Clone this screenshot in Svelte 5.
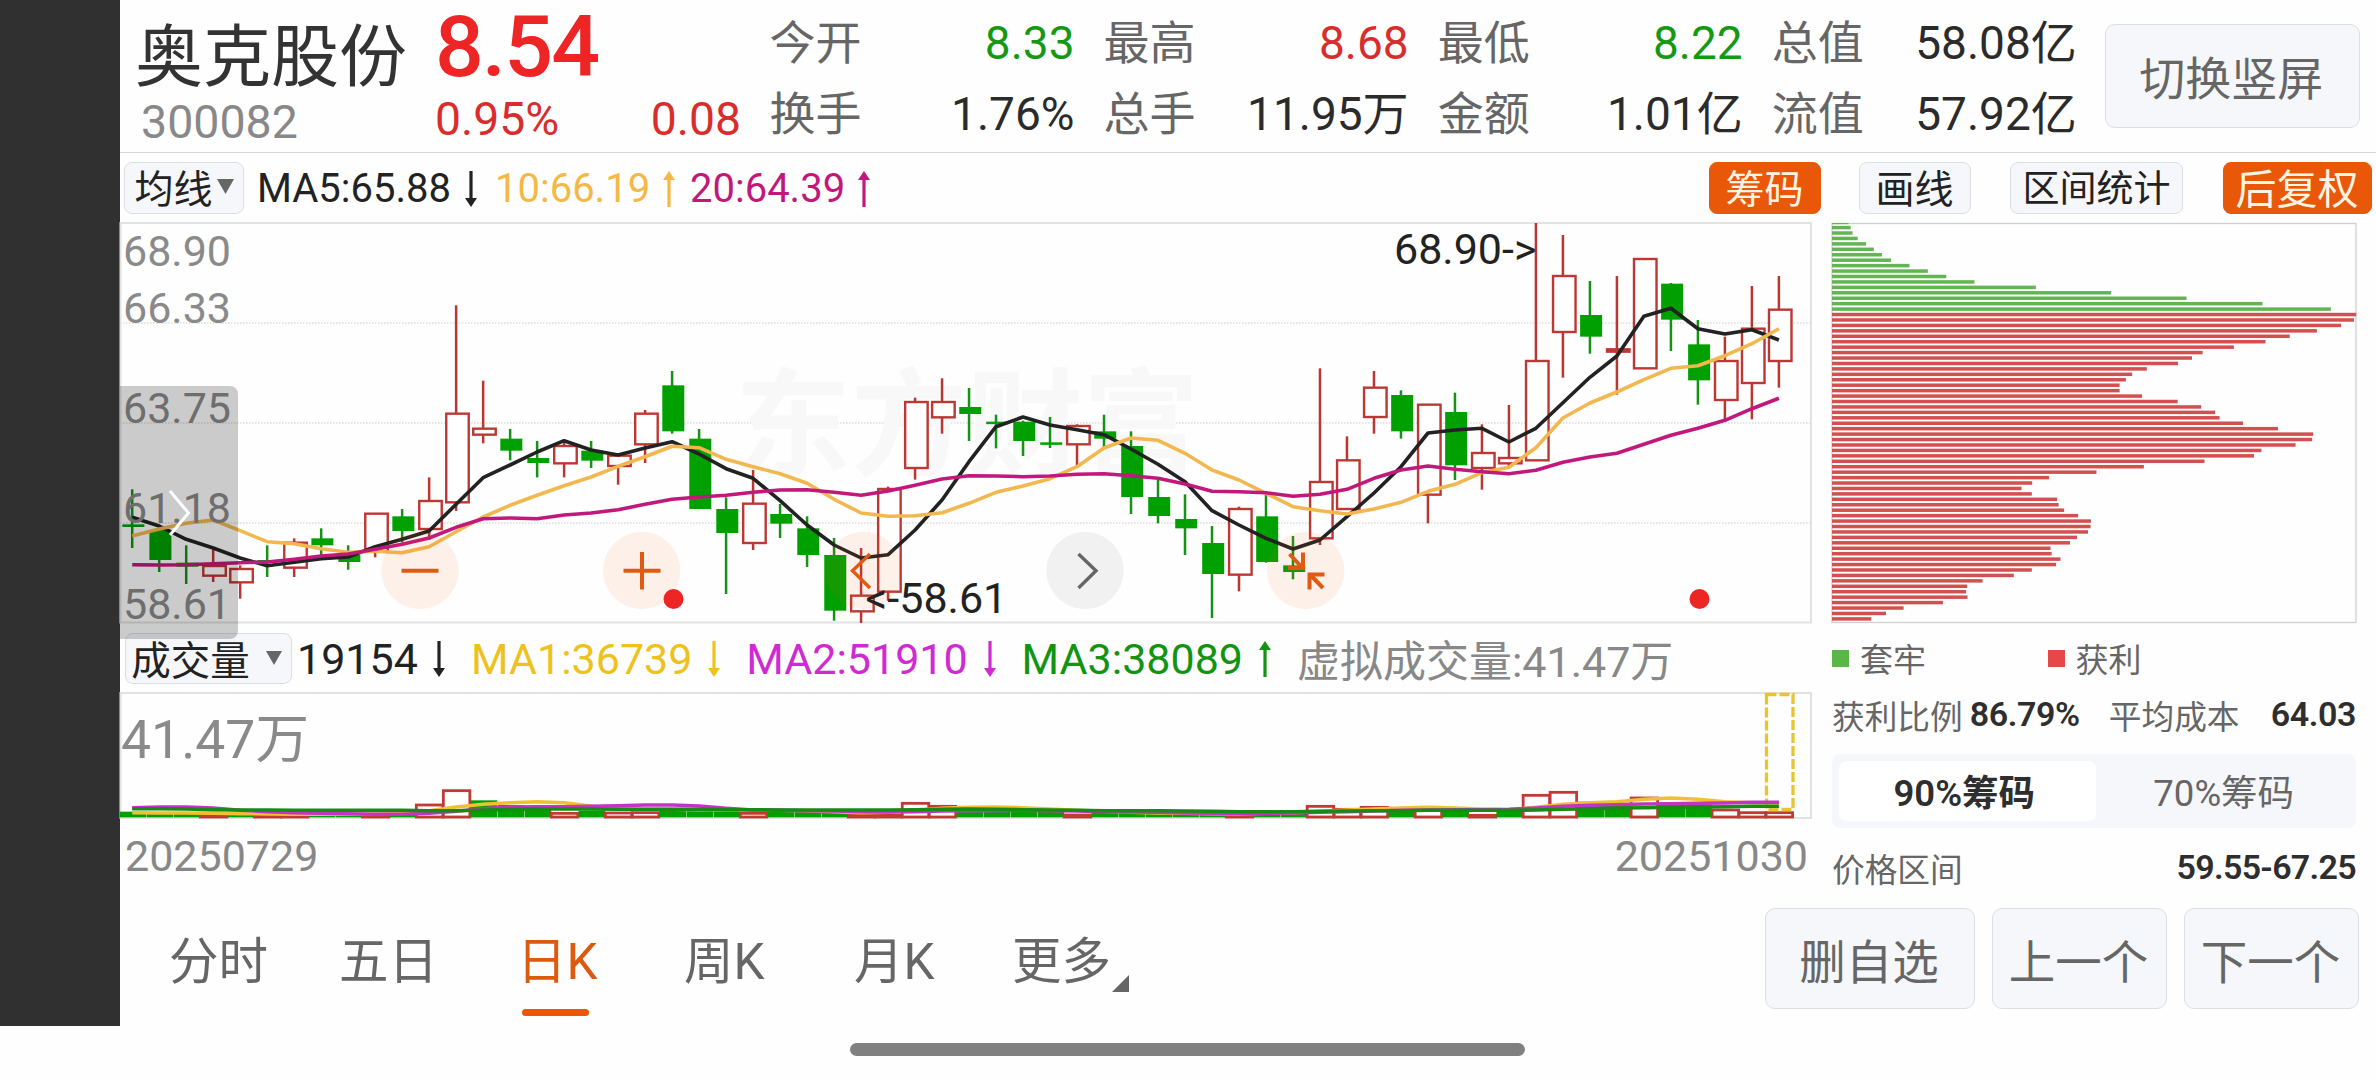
<script>
  const metrics = [
    { label: '今开', value: '8.33', tone: 'down' },
    { label: '最高', value: '8.68', tone: 'up' },
    { label: '最低', value: '8.22', tone: 'down' },
    { label: '总值', value: '58.08亿', tone: '' },
    { label: '换手', value: '1.76%', tone: '' },
    { label: '总手', value: '11.95万', tone: '' },
    { label: '金额', value: '1.01亿', tone: '' },
    { label: '流值', value: '57.92亿', tone: '' },
  ];

  const averages = [
    { text: 'MA5:65.88', dir: 'down', cls: 'ink' },
    { text: '10:66.19', dir: 'up', cls: 'amber' },
    { text: '20:64.39', dir: 'up', cls: 'plum' },
  ];

  const volumes = [
    { text: '19154', dir: 'down', cls: 'ink' },
    { text: 'MA1:36739', dir: 'down', cls: 'gold' },
    { text: 'MA2:51910', dir: 'down', cls: 'violet' },
    { text: 'MA3:38089', dir: 'up', cls: 'green' },
  ];

  const tabs = ['分时', '五日', '日K', '周K', '月K', '更多'];

  // Chart readings are stored in thirds of a pixel below PRICE_TOP.
  const PRICE_TOP = 210;
  const py = (v) => PRICE_TOP + v / 3;
  const cx = (i) => 132.2 + 26.995 * i;

  // [direction, high, body top, body bottom, low]
  const candles = [
    ['g', 838, 943, 951, 1014], ['g', 955, 960, 1050, 1086], ['g', 1006, 1058, 1070, 1122],
    ['r', 1018, 1068, 1097, 1116], ['r', 1066, 1077, 1117, 1166], ['g', 1006, 1050, 1056, 1101],
    ['r', 985, 998, 1073, 1101], ['g', 955, 985, 1006, 1040], ['g', 1006, 1035, 1056, 1079],
    ['r', 909, 911, 1025, 1042], ['g', 897, 919, 963, 998], ['r', 802, 873, 957, 990],
    ['r', 286, 611, 877, 903], ['r', 512, 656, 674, 700], ['g', 657, 686, 722, 751],
    ['g', 693, 744, 759, 802], ['r', 690, 708, 760, 802], ['g', 693, 722, 752, 774],
    ['r', 733, 737, 768, 824], ['r', 600, 611, 703, 759], ['g', 483, 526, 664, 671],
    ['g', 657, 686, 897, 897], ['g', 862, 897, 969, 1152], ['r', 780, 881, 999, 1020],
    ['g', 882, 912, 941, 984], ['g', 919, 955, 1035, 1071], ['g', 984, 1035, 1202, 1232],
    ['r', 1014, 1157, 1204, 1239], ['r', 830, 837, 1145, 1172], ['r', 563, 576, 774, 809],
    ['r', 505, 576, 622, 671], ['g', 534, 591, 612, 693], ['g', 614, 635, 641, 715],
    ['g', 632, 635, 693, 738], ['g', 621, 697, 703, 714], ['r', 643, 648, 703, 773],
    ['g', 614, 664, 686, 712], ['g', 664, 708, 861, 912], ['g', 810, 861, 918, 940],
    ['g', 853, 927, 955, 1035], ['g', 948, 999, 1092, 1224], ['r', 890, 897, 1094, 1144],
    ['g', 855, 919, 1056, 1058], ['g', 978, 1066, 1086, 1108], ['r', 475, 816, 985, 1005],
    ['r', 679, 751, 897, 897], ['r', 483, 533, 621, 671], ['g', 541, 555, 664, 686],
    ['r', 584, 584, 854, 940], ['g', 548, 606, 766, 810], ['r', 643, 729, 774, 839],
    ['r', 585, 744, 760, 768], ['r', 39, 453, 751, 751], ['r', 75, 198, 366, 503],
    ['g', 213, 315, 380, 431], ['r', 198, 418, 425, 554], ['r', 147, 147, 475, 475],
    ['g', 219, 221, 329, 423], ['g', 330, 403, 511, 584], ['r', 380, 453, 570, 632],
    ['r', 228, 356, 519, 628], ['r', 198, 299, 453, 533],
  ];

  const ma5 = [922, 948, 988, 1014, 1044, 1067, 1057, 1046, 1041, 1010, 988, 963, 883, 803, 765, 726, 692, 720, 735, 714, 695, 732, 776, 805, 872, 945, 1005, 1044, 1034, 960, 870, 755, 650, 621, 645, 659, 674, 717, 763, 815, 902, 945, 985, 1017, 990, 920, 849, 770, 669, 660, 655, 696, 655, 578, 502, 438, 319, 295, 356, 372, 359, 390];
  const ma10 = [978, 957, 940, 930, 962, 995, 1001, 1016, 1027, 1024, 1028, 1010, 965, 921, 886, 856, 827, 801, 769, 740, 709, 713, 748, 770, 791, 820, 868, 909, 919, 917, 908, 880, 847, 828, 806, 770, 714, 684, 691, 730, 780, 810, 850, 890, 902, 912, 897, 877, 844, 823, 788, 772, 713, 624, 579, 546, 509, 475, 467, 437, 401, 356];
  const ma20 = [1064, 1065, 1064, 1061, 1058, 1056, 1048, 1038, 1032, 1018, 1003, 984, 952, 926, 924, 926, 915, 909, 899, 883, 868, 861, 856, 847, 840, 839, 847, 856, 843, 826, 807, 797, 798, 800, 798, 793, 791, 797, 805, 822, 844, 845, 848, 859, 853, 838, 805, 780, 768, 778, 785, 791, 781, 757, 741, 730, 703, 676, 655, 631, 596, 565];

  const line = (arr, f) => arr.map((v, i) => `${cx(i).toFixed(1)},${f(v).toFixed(1)}`).join(' ');

  // Bar lengths of the cost distribution, top to bottom
  const chips = [132, 138, 143, 157, 180, 201, 223, 248, 298, 348, 398, 475, 642, 847, 1052, 1259, 1445,
    1514, 1508, 1473, 1407, 1333, 1267, 1181, 1096, 1067, 1029, 944, 904, 887, 870, 870, 931, 1028, 1092, 1130, 1142,
    1206, 1301, 1397, 1394, 1349, 1256, 1236, 1101, 936, 807, 678, 632, 603, 631, 700, 704, 719, 757, 792, 791,
    784, 754, 735, 682, 685, 709, 697, 631, 582, 497, 455, 452, 456, 389, 282, 234, 194];
  const TRAPPED = 17;

  // Volume bars: direction and top
  const vy = (v) => 620 + v / 3;
  const vols = 'g575 g577 g579 r582 g580 r584 r584 g584 g584 r582 g584 r552 r509 g541 g555 g566 r577 g572 r576 r575 g572 g572 g574 r577 g574 g575 g576 r583 r583 r547 r556 g565 g568 g571 g572 r582 g574 g575 g576 g576 g577 r584 g578 g578 r556 r565 r559 g566 r568 g570 r583 g570 r523 r514 g545 g552 r531 g553 g553 r567 r575 r575'
    .split(' ').map((s) => ({ up: s[0] === 'r', top: +s.slice(1) }));

  const v1 = [578, 579, 579, 580, 581, 582, 583, 583, 583, 582, 580, 572, 561, 553, 548, 545, 548, 558, 566, 568, 568, 569, 569, 570, 571, 572, 575, 578, 577, 571, 565, 562, 561, 563, 567, 571, 574, 577, 579, 580, 581, 581, 580, 579, 574, 570, 567, 564, 562, 564, 567, 569, 562, 553, 548, 545, 538, 534, 538, 545, 548, 549];
  const v2 = [563, 561, 561, 564, 571, 575, 578, 580, 581, 583, 583, 580, 574, 566, 561, 560, 560, 559, 557, 555, 555, 558, 565, 570, 571, 572, 573, 575, 576, 575, 573, 572, 572, 571, 572, 573, 575, 576, 577, 579, 580, 580, 580, 579, 577, 575, 573, 571, 570, 569, 569, 568, 564, 559, 556, 554, 552, 551, 550, 549, 547, 547];
  const v3 = [566, 566, 567, 569, 570, 570, 571, 571, 571, 571, 571, 572, 572, 570, 568, 567, 567, 567, 568, 568, 568, 568, 569, 569, 570, 570, 570, 570, 570, 569, 568, 567, 568, 569, 570, 571, 572, 572, 572, 573, 574, 575, 575, 575, 574, 573, 572, 572, 571, 571, 571, 571, 570, 568, 566, 564, 563, 562, 561, 560, 559, 559];
</script>

{#snippet arrow(dir)}
  <svg class="arrow" class:flip={dir === 'down'} viewBox="0 0 12 36" width="12" height="36">
    <path d="M6 4V36" stroke="currentColor" stroke-width="3.200" />
    <path d="M6 0L12 9H0Z" fill="currentColor" />
  </svg>
{/snippet}

<div class="screen">
  <div class="body">
    <aside></aside>
    <main>
      <header>
        <div class="stock">
          <div class="name">奥克股份</div>
          <div class="code">300082</div>
        </div>
        <div class="quote">
          <div class="price">8.54</div>
          <div class="change"><span>0.95%</span><span>0.08</span></div>
        </div>
        <div class="metrics">
          {#each metrics as m}
            <div class="metric"><span class="label">{m.label}</span><span class={m.tone}>{m.value}</span></div>
          {/each}
        </div>
        <button class="rotate">切换竖屏</button>
      </header>

      <div class="toolbar">
        <button class="pick ma-pick">均线<svg width="17" height="15" viewBox="0 0 17 15"><path d="M0 0H17L8.5 15Z" fill="#666" /></svg></button>
        <div class="averages">
          {#each averages as a}
            <span class={a.cls}>{a.text}{@render arrow(a.dir)}</span>
          {/each}
        </div>
        <div class="tools">
          <button class="hot">筹码</button>
          <button>画线</button>
          <button class="stats">区间统计</button>
          <button class="hot adjust">后复权</button>
        </div>
      </div>

      <div class="content">
        <section class="charts">
          <div class="drawer">
            <svg width="24" height="48" viewBox="0 0 24 48"><path d="M2 2L20.500 24L2 46" fill="none" stroke="#fff" stroke-width="3" /></svg>
          </div>
          <svg class="plot" width="1692" height="402" viewBox="120 222 1692 402">
            <rect x="120.500" y="223" width="1690.500" height="399.500" fill="none" stroke="#e2e2e2" stroke-width="2" />
            {#each [323, 423, 523] as y}
              <line x1="120" x2="1811" y1={y} y2={y} stroke="#dcdcdc" stroke-width="1.600" stroke-dasharray="1.500 1.500" />
            {/each}
            <text class="watermark" x="735" y="466">东方财富</text>
            {#each candles as [d, hi, top, bot, lo], i}
              {#if d === 'g'}
                <line x1={cx(i)} x2={cx(i)} y1={py(hi)} y2={py(lo)} stroke="#159315" stroke-width="2.500" />
                <rect x={cx(i) - 9.800} y={py(top)} width="22" height={Math.max(2.500, (bot - top) / 3)} fill="#00a000" />
              {:else}
                <line x1={cx(i)} x2={cx(i)} y1={py(hi)} y2={py(top)} stroke="#b93632" stroke-width="2.500" />
                <line x1={cx(i)} x2={cx(i)} y1={py(bot)} y2={py(lo)} stroke="#b93632" stroke-width="2.500" />
                <rect x={cx(i) - 9.900} y={py(top)} width="22.500" height={(bot - top) / 3} fill={i === 55 ? '#b93632' : '#fff'} stroke="#bc3834" stroke-width="2.400" />
              {/if}
            {/each}
            <polyline points={line(ma5, py)} fill="none" stroke="#222" stroke-width="3.600" stroke-linejoin="round" />
            <polyline points={line(ma10, py)} fill="none" stroke="#f2b84f" stroke-width="3.600" stroke-linejoin="round" />
            <polyline points={line(ma20, py)} fill="none" stroke="#c2187c" stroke-width="3.600" stroke-linejoin="round" />

            <g class="axis">
              <text x="123" y="266">68.90</text>
              <text x="123" y="323">66.33</text>
              <text x="123" y="423">63.75</text>
              <text x="123" y="522.500">61.18</text>
              <text x="123" y="618.500">58.61</text>
            </g>

            <g fill="#f05a10" fill-opacity="0.085">
              <circle cx="420" cy="570.500" r="38.700" />
              <circle cx="641.700" cy="570.500" r="38.700" />
              <circle cx="863.500" cy="570.500" r="38.700" />
              <circle cx="1305.700" cy="570.500" r="38.700" />
            </g>
            <circle cx="1085" cy="570.500" r="38.700" fill="#000" fill-opacity="0.050" />
            <g fill="none" stroke="#e05a12" stroke-width="4">
              <path d="M401.500 570.700H438.500M623.500 570.700H660.500M642 552V589.500" />
              <path d="M870 554L852.500 570.700L870 588" stroke-width="3.400" />
              <path d="M1289.500 554L1302 567.500M1303 552.500V568H1288M1323 588L1310 574.500M1309.500 589.500V574.500H1324.500" />
            </g>
            <path d="M1078.500 554L1096 570.700L1078.500 588" fill="none" stroke="#666" stroke-width="3.400" />
            <circle cx="673.500" cy="599" r="10" fill="#ee2525" />
            <circle cx="1699.500" cy="599" r="10" fill="#ee2525" />
            <text class="mark" x="865.500" y="612.500">&lt;-58.61</text>
            <text class="mark" x="1394" y="263.500">68.90-&gt;</text>
          </svg>

          <div class="volbar">
            <button class="pick vol-pick">成交量<svg width="16" height="14" viewBox="0 0 16 14"><path d="M0 0H16L8 14Z" fill="#666" /></svg></button>
            {#each volumes as v}
              <span class={v.cls}>{v.text}{@render arrow(v.dir)}</span>
            {/each}
            <span class="grey">虚拟成交量:41.47万</span>
          </div>

          <svg class="plot" width="1692" height="128" viewBox="120 692 1692 128">
            <rect x="120.500" y="693" width="1690.500" height="125" fill="none" stroke="#e2e2e2" stroke-width="2" />
            <text class="volmax" x="121" y="757.500">41.47万</text>
            {#each vols as v, i}
              {#if v.up}
                <rect x={cx(i) - 12.800} y={vy(v.top) + 1} width="26.500" height={(591 - v.top) / 3 - 1} fill="#fff" stroke="#c03a36" stroke-width="2.800" />
              {:else}
                <rect x={cx(i) - 12.500} y={vy(v.top)} width="26.600" height={(592 - v.top) / 3} fill="#00a000" />
              {/if}
            {/each}
            <rect x="1766.500" y="694.500" width="26.500" height="115" fill="none" stroke="#e8c52c" stroke-width="3.300" stroke-dasharray="10 3" />
            <polyline points={line(v1, vy)} fill="none" stroke="#f0c030" stroke-width="3.400" />
            <polyline points={line(v2, vy)} fill="none" stroke="#c234c4" stroke-width="3.400" />
            <polyline points={line(v3, vy)} fill="none" stroke="#168c16" stroke-width="3.600" />
          </svg>
          <div class="dates"><span>20250729</span><span>20251030</span></div>
        </section>

        <section class="chip-panel">
          <svg class="plot" width="528" height="402" viewBox="1830 222 528 402">
            <rect x="1832" y="223.500" width="524" height="399" fill="none" stroke="#cfcfcf" stroke-width="1.300" />
            {#each chips as c, k}
              <rect x="1832" y={Math.max(223, 220.400 + 5.435 * k)} width={c / 2.722 - 32} height={k === 0 ? 1.200 : 3.500} fill={k < TRAPPED ? '#63b553' : '#d25050'} />
            {/each}
          </svg>
          <div class="legend">
            <span><i class="sq trapped"></i>套牢</span>
            <span><i class="sq gain"></i>获利</span>
          </div>
          <div class="facts">
            <span>获利比例</span><b>86.79%</b><span class="avg">平均成本</span><b class="end">64.03</b>
          </div>
          <div class="segment"><div class="on">90%筹码</div><div>70%筹码</div></div>
          <div class="facts range"><span>价格区间</span><b class="end">59.55-67.25</b></div>
        </section>
      </div>

      <footer>
        <nav>
          {#each tabs as t, i}
            <div class="tab tab{i}" class:active={i === 2}>{t}{#if i === 5}<svg width="17" height="17" viewBox="0 0 17 17"><path d="M17 0V17H0Z" fill="#666" /></svg>{/if}</div>
          {/each}
        </nav>
        <div class="actions">
          <button class="wide">删自选</button>
          <button>上一个</button>
          <button>下一个</button>
        </div>
      </footer>
    </main>
  </div>
  <div class="home"></div>
</div>

<style>
  :global(body) { background: #fefefe; }
  .screen {
    width: 2376px;
    height: 1080px;
    background: #fefefe;
    color: #2b2b2b;
    font-family: Roboto, 'Noto Sans CJK SC', sans-serif;
    white-space: nowrap;
  }
  .screen :global(*) { box-sizing: border-box; }
  .body { display: flex; height: 1026px; }
  aside { width: 120px; background: #303030; }
  main { width: 2256px; display: flex; flex-direction: column; }
  button {
    font: inherit;
    color: inherit;
    padding: 0;
    margin: 0;
    border: 1.500px solid #dcdfe2;
    border-radius: 8px;
    background: #f6f7fa;
    display: flex;
    align-items: center;
    justify-content: center;
  }
  svg { display: block; flex: none; }
  .plot { overflow: visible; }

  header { height: 153px; display: flex; border-bottom: 1.500px solid #d6d6d6; }
  .stock { width: 315px; padding: 18px 0 0 15px; }
  .name { font-size: 68px; line-height: 80px; color: #333; }
  .code { font-size: 46.500px; line-height: 48px; color: #888; padding-left: 6px; }
  .quote { width: 306px; color: #d92d2d; }
  .price { font-size: 86px; font-weight: 500; line-height: 93px; letter-spacing: -1.800px; color: #ee2525; }
  .change { display: flex; justify-content: space-between; font-size: 46.300px; line-height: 53px; }
  .metrics {
    display: grid;
    grid-template-columns: repeat(4, 305px);
    grid-auto-rows: 71.500px;
    column-gap: 29.100px;
    padding-top: 7.500px;
    margin-left: 28.500px;
    font-size: 46px;
    line-height: 71.500px;
  }
  .metric { display: flex; justify-content: space-between; }
  .label { color: #666; }
  .up { color: #d92d2d; }
  .down { color: #159915; }
  .rotate { width: 255px; height: 104px; margin: 24px 0 0 28px; padding: 0 2px 3px 0; font-size: 46px; color: #666; border-radius: 10px; }

  .toolbar { height: 69px; display: flex; align-items: center; padding-left: 4px; font-size: 39px; color: #222; }
  .toolbar button { height: 52px; padding-bottom: 3px; }
  .toolbar .ma-pick { width: 120px; gap: 4px; }
  .averages { display: flex; margin-left: 13px; padding-top: 2px; font-size: 40px; }
  .averages span, .volbar span { display: flex; align-items: center; }
  .averages span { width: 195px; gap: 13px; }
  .averages span:first-child { width: 238px; gap: 14px; }
  .arrow.flip { transform: rotate(180deg); }
  .ink { color: #222; }
  .amber { color: #f5b845; }
  .plum { color: #c2187c; }
  .gold { color: #eec21c; }
  .violet { color: #cf2ad4; }
  .green { color: #129412; }
  .grey { color: #888; padding-bottom: 2px; }
  .tools { display: flex; margin-left: auto; margin-right: 4.500px; }
  .tools button { width: 112px; margin-right: 39.500px; }
  .tools .hot { margin-right: 38px; }
  .tools .stats { width: 173px; font-size: 37px; }
  .tools .adjust { width: 149px; margin-right: 0; font-size: 41px; }
  .tools .hot { background: #e85808; color: #fff4e4; border-color: #e85808; }

  .content { display: flex; height: 676px; }
  .charts { width: 1692px; position: relative; }
  .drawer {
    position: absolute;
    left: 0;
    top: 164px;
    width: 118px;
    height: 253px;
    padding: 103px 0 0 48px;
    border-radius: 0 8px 8px 0;
    background: rgba(0, 0, 0, 0.2);
    z-index: 1;
  }
  .axis text, .mark { font-size: 43px; }
  .axis { fill: #8a8a8a; }
  .mark { fill: #222; }
  .watermark { font-size: 116px; font-weight: 700; fill: #f8f8f8; }
  .volmax { font-size: 53.500px; fill: #8a8a8a; }
  .volbar { display: flex; align-items: center; height: 68px; padding: 1px 0 0 5px; font-size: 43px; }
  .volbar .vol-pick { width: 167px; height: 51px; padding: 0 4px 2px 0; font-size: 39.500px; gap: 16px; color: #222; margin-right: 5px; }
  .volbar .ink { width: 174px; gap: 15px; }
  .volbar .gold, .volbar .violet, .volbar .green { width: 275.300px; gap: 16px; }
  .dates { display: flex; justify-content: space-between; padding: 9px 4px 0 5px; font-size: 43px; line-height: 54px; color: #888; }

  .chip-panel { width: 564px; padding-left: 18px; }
  .legend { display: flex; margin-left: 2px; height: 68px; font-size: 33px; color: #666; }
  .legend span { display: flex; align-items: center; width: 215.500px; }
  .sq { width: 17px; height: 17px; margin-right: 11px; }
  .trapped { background: #59b747; }
  .gain { background: #e64848; }
  .facts { display: flex; align-items: center; width: 524px; height: 44px; margin-left: 2px; font-size: 32.700px; color: #666; }
  .facts b { font-size: 34px; font-weight: 600; letter-spacing: -0.400px; color: #2e2e2e; margin-left: 7px; }
  .facts .avg { margin-left: 29px; }
  .facts .end { margin-left: auto; }
  .facts.range b { letter-spacing: -0.700px; }
  .segment {
    display: flex;
    width: 524px;
    height: 74px;
    margin: 18px 0 0 2px;
    padding: 7px;
    border-radius: 8px;
    background: #f6f7fa;
    font-size: 36.500px;
    color: #666;
  }
  .segment div { flex: 1; display: flex; align-items: center; justify-content: center; padding: 0 0 2px 3px; border-radius: 8px; }
  .segment .on { background: #fff; font-weight: 600; color: #2e2e2e; padding: 0 6px 2px 0; }
  .facts.range { margin-top: 17px; }

  footer { display: flex; justify-content: space-between; height: 128px; padding: 10px 17px 0 49px; font-size: 49.500px; color: #666; }
  nav { display: flex; }
  .tab { position: relative; width: 170px; height: 108px; line-height: 109px; }
  .tab1 { width: 178px; }
  .tab2 { width: 167px; }
  .tab3 { width: 170px; }
  .tab4 { width: 158px; }
  .tab5 { display: flex; }
  .tab5 svg { margin: 67px 0 0 1px; }
  .tab.active { color: #dc5a10; }
  .tab.active::after {
    content: '';
    position: absolute;
    left: 5px;
    bottom: 0;
    width: 67px;
    height: 7px;
    border-radius: 3.500px;
    background: #e85808;
  }
  .actions { display: flex; gap: 17px; }
  .actions button { width: 175px; height: 101px; font-size: 46.500px; border-radius: 10px; padding: 0 2px 1px 0; }
  .actions .wide { width: 210px; }
  .home { width: 675px; height: 13px; margin: 17px 0 0 850px; border-radius: 6.500px; background: #808080; }
</style>
